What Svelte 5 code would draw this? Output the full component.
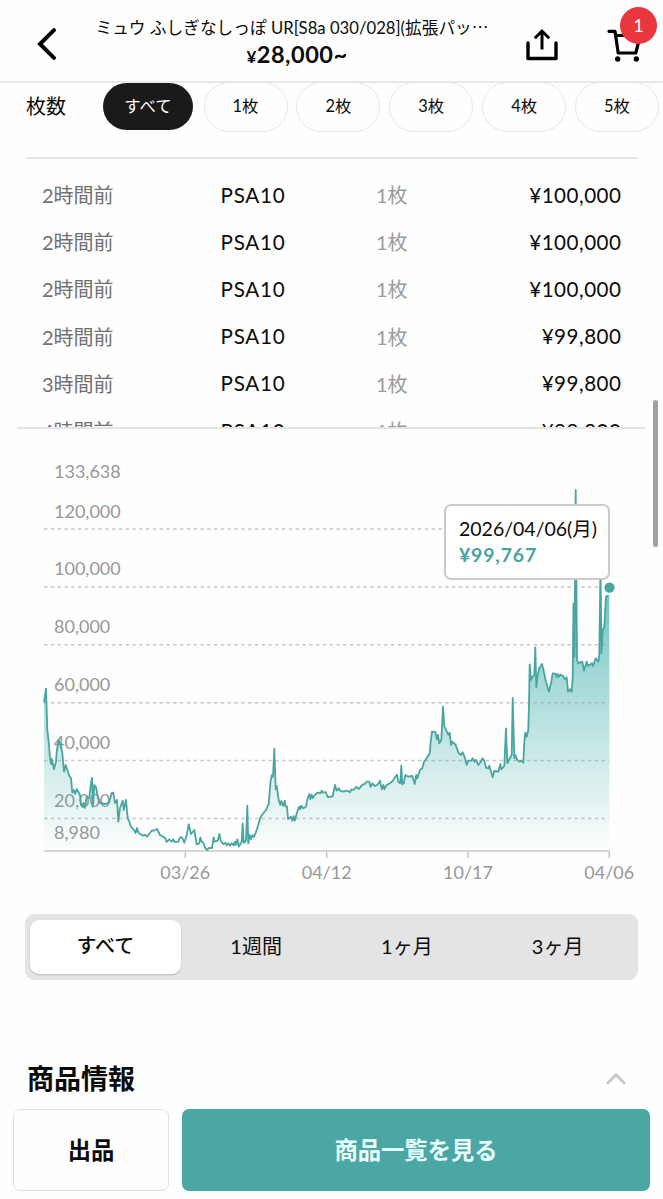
<script lang="ts">
	const counts = ["1枚", "2枚", "3枚", "4枚", "5枚"]
	const periods = ["すべて", "1週間", "1ヶ月", "3ヶ月"]
	let period = "すべて"

	const sales = [
		{ time: "2時間前", price: "¥100,000" },
		{ time: "2時間前", price: "¥100,000" },
		{ time: "2時間前", price: "¥100,000" },
		{ time: "2時間前", price: "¥99,800" },
		{ time: "3時間前", price: "¥99,800" },
		{ time: "4時間前", price: "¥99,800" },
	]

	const base = 851
	const yLabels = [
		{ text: "133,638", y: 478 },
		{ text: "120,000", y: 517.5, line: 529 },
		{ text: "100,000", y: 575.3, line: 587 },
		{ text: "80,000", y: 633.2, line: 644.8 },
		{ text: "60,000", y: 691, line: 702.8 },
		{ text: "40,000", y: 748.8, line: 760.6 },
		{ text: "20,000", y: 806.6, line: 818.4 },
		{ text: "8,980", y: 838.6 },
	]
	const xLabels = [
		{ text: "03/26", x: 185.3 },
		{ text: "04/12", x: 326.7 },
		{ text: "10/17", x: 468 },
		{ text: "04/06", x: 609.3 },
	]

	const line = `44,702.7 46,688.7 47.3,730 48.7,741.7 50,758.3 51,764 51.7,759 54,769 56,761.7 56.7,751.7
		58.7,740 60.7,745 62.3,753 64,771.7 65.7,765 69.3,776 71,778 72.3,792.7 73.7,790 75,794 76.7,789 80,795
		81,805 82.7,807 83.3,803 84.7,808 86.7,796.7 89.3,798 90.7,785 92,778 93,806.7 94.3,785 96,787 97.7,796
		100,803 105,804 109,802.7 111.7,793 113.3,792.7 115,803 117,800 118.3,821.7 120,808 122.7,800.7 123.7,810
		126,800 127.7,818 129.3,821.7 131,826.7 134,830 135.7,833 137,828 138.7,833 143,835.7 145,834.7 147,836.7
		151.7,830.7 154,830.5 157,829 160,835 165,837.7 166.7,842 169.3,839.3 171.7,841.7 173.3,839.3 174.7,842
		178.3,841.7 180,837.3 182,837.3 184.3,842.7 186.7,835 188.7,824.3 191,834 194.3,830 196.7,844.3 199.3,843.3
		200.3,837.3 201.7,841.7 203.3,842.7 205,847.7 207.3,850 208.7,848 212,848 213.7,837.3 214.7,841.7 217.7,840.7
		219.3,834 220.7,840.7 223.3,844 225.3,842.7 226.7,845.3 228.3,843.3 230,845.7 231.7,843.3 233.3,845.3
		235,841.7 235.7,845 237.3,839.3 238.7,846.7 241.7,841.7 242.7,823.3 243.7,842.7 246,840.7 247.3,805.7
		248.3,843.3 249.7,835 251,839.3 252.7,835 254,837 256.7,830 258.3,825 260,818.3 262.7,814 266,810 268.7,804
		270.7,780 272,775 273,776.7 274.3,748.7 275.7,789.3 276.7,786 278.7,800 280.3,805 281.3,801 283.3,806
		284.7,800.7 285.7,806.7 287,806.7 288,819 291,816.7 292.3,820.7 293.7,816 294.7,820.7 297.3,811.7
		299.3,806.7 300.3,809.3 301.3,805.7 303.3,808.3 306,806.7 307.3,799.3 309.3,794 310.3,799.3 311.7,794.7
		312.7,798 315,795 317.3,792.7 320.7,793 321.7,790.7 323,792.7 325.7,792 327.7,797 332.7,796.3 335,785
		336.7,790.7 338.7,788.3 340,790.7 343.3,791.7 347.3,790.7 350,792.3 351.3,789.3 354,789.7 356.3,786.7
		359,789 360.7,786.7 362.7,784.3 364.3,784.3 366.7,781.7 369.3,781.7 370.7,787 372.3,783.3 375,786 377.3,785
		380,780.7 381.7,789.3 383.3,785 384.3,789.3 386.7,785 390,783.3 392.7,781 395,777.3 397,774.7 398.3,781.7
		400.3,783.3 401.3,765.7 402.3,784.3 403.7,783.3 405.3,775 408.3,776.7 412.3,776 414.7,784 416.3,775
		417.3,778.3 420,770 422.3,768.3 424,761.7 426.7,758.3 429.7,753.3 430.7,741.7 432,731.7 435.3,732 437,739.3
		438,735 439.3,743.3 441.3,740 443,706.7 444.3,726 448.3,735 449.7,732.7 451,745 452.3,741.7 455.7,745
		458.7,753.3 461,755 462.7,752.3 464.3,756 466.7,765 468.3,760.7 471.3,760.7 472.7,758.3 474.7,761.7
		476,759.7 478.3,765 480,763 482.5,758.3 484.3,760.7 486,767.7 488.3,768.3 489.3,765.7 492.7,777.3 494.3,771
		498.3,771.7 500.3,764 501.3,769.3 504.3,766 506,728.3 507.3,763.3 509.3,759.3 511.7,755 512.7,698 514.3,758.3
		515.3,755 517,759.3 519.3,761.7 521.7,760.7 523.3,762.7 524.3,741.7 525.3,732.7 526.7,736.7 528.3,730
		529,704 529.7,664.3 531,680 532.7,676.7 534.3,675 535.3,647.3 536.3,687.3 537.7,675 539.3,668.3 542,664
		543.3,669.3 546,681.7 549,691.7 551.3,681.7 552.7,673.3 555.7,674 556.7,677.3 557.7,674 559,676.7
		560.3,674.7 563.3,676 564.7,679.3 566.7,677.3 568,691.7 570,689.3 571.7,691.7 572.7,676.7 573.5,603.3
		574.5,656.7 575.7,490 577,660 578.3,663.3 582.3,661.7 584,670.7 586.7,661.7 588,666 592,663.3 593,666
		595.7,658.3 598.3,661.7 599.3,655 600.5,565 601.5,653 602.7,630 604.3,626.7 606,596.7 609.3,594`

	const area = `44,${base} ${line} 609.5,${base}`
</script>

<div class="page" lang="ja">
	<header>
		<button class="back" aria-label="戻る">
			<svg width="22" height="34" viewBox="0 0 22 34">
				<path d="M18 3.2 L4 17 L18 30.8" fill="none" stroke="#000" stroke-width="4" stroke-linecap="round" />
			</svg>
		</button>
		<div class="heading">
			<div class="title">ミュウ ふしぎなしっぽ UR[S8a 030/028](拡張パッ<span class="more">…</span></div>
			<div class="price"><small>¥</small>28,000~</div>
		</div>
		<svg class="share" width="34" height="34" viewBox="0 0 34 34" fill="none" stroke="#000" stroke-width="3.4">
			<path d="M3 15 V30.5 H31 V15" stroke-linecap="round" stroke-linejoin="round" />
			<path d="M17 21.5 V3.8 M9.8 10.2 L17 3 L24.2 10.2" stroke-width="3" />
		</svg>
		<div class="cart">
			<svg width="36" height="34" viewBox="0 0 36 34">
				<path d="M2 3.3 H8 L11.2 25 H28.8 L33.2 7.5 H8.8" fill="none" stroke="#000" stroke-width="3.2" stroke-linecap="round" stroke-linejoin="round" />
				<circle cx="10.7" cy="31" r="2.7" />
				<circle cx="29.3" cy="31" r="2.7" />
			</svg>
			<span class="badge">1</span>
		</div>
	</header>

	<div class="filter">
		<span class="label">枚数</span>
		<button class="chip active">すべて</button>
		{#each counts as count}
			<button class="chip">{count}</button>
		{/each}
	</div>

	<div class="sales">
		{#each sales as sale}
			<div class="row">
				<span class="time">{sale.time}</span>
				<span class="grade">PSA10</span>
				<span class="qty">1枚</span>
				<span class="amount">{sale.price}</span>
			</div>
		{/each}
	</div>

	<div class="chart">
		<svg width="663" height="470" viewBox="0 429 663 470">
			<defs>
				<linearGradient id="fade" x1="0" y1="490" x2="0" y2={base} gradientUnits="userSpaceOnUse">
					<stop offset="0" stop-color="#3fb0aa" />
					<stop offset="1" stop-color="#3fb0aa" stop-opacity="0" />
				</linearGradient>
			</defs>
			{#each yLabels as label}
				<text x="54" y={label.y}>{label.text}</text>
			{/each}
			<polygon points={area} fill="url(#fade)" />
			{#each yLabels as label}
				{#if label.line}
					<line class="grid" x1="44" x2="609" y1={label.line} y2={label.line} />
				{/if}
			{/each}
			<path class="axis" d="M44 {base} H609.5" />
			{#each xLabels as label}
				<path class="axis" d="M{label.x} {base} v7" />
				<text x={label.x} y="879" text-anchor="middle">{label.text}</text>
			{/each}
			<polyline points={line} fill="none" stroke="#48a5a0" stroke-width="1.8" stroke-linejoin="round" />
			<circle cx="609.5" cy="587.6" r="6.5" fill="#48a5a0" stroke="#fff" stroke-width="2.6" />
		</svg>
		<div class="tooltip">
			<div>2026/04/06(月)</div>
			<strong>¥99,767</strong>
		</div>
	</div>

	<div class="periods">
		{#each periods as p}
			<button class:selected={p === period} on:click={() => (period = p)}>{p}</button>
		{/each}
	</div>

	<div class="info">
		<h2>商品情報</h2>
		<svg width="22" height="14" viewBox="0 0 22 14">
			<path d="M2 11.8 L11 3 L20 11.8" fill="none" stroke="#c6c6c6" stroke-width="3" />
		</svg>
	</div>

	<footer>
		<button class="sell">出品</button>
		<button class="list">商品一覧を見る</button>
	</footer>

	<div class="scrollbar"></div>
</div>

<style>
	:global(body) {
		background: #fff;
	}

	.page {
		position: relative;
		display: flex;
		flex-direction: column;
		width: 663px;
		height: 1199px;
		overflow: hidden;
		color: #0b0b0b;
		background: #fefefe;
		font-family: Lato, "Noto Sans CJK JP", sans-serif;
	}

	button {
		padding: 0;
		border: none;
		background: none;
		color: inherit;
		font: inherit;
		cursor: pointer;
	}

	svg {
		display: block;
		flex: none;
	}

	header {
		box-sizing: border-box;
		display: flex;
		flex: none;
		height: 83px;
		padding: 0 20px 0 36px;
		border-bottom: 2px solid #e8e8e8;
	}

	.back {
		height: 34px;
		margin-top: 27px;
	}

	.heading {
		flex: none;
		width: 396px;
		margin: 15px 0 0 36px;
		text-align: center;
		white-space: nowrap;
	}

	.title {
		font-size: 16.7px;
		line-height: 24px;
	}

	.more {
		font-family: "Noto Sans CJK JP", sans-serif;
	}

	.price {
		padding-left: 10px;
		font-size: 23.5px;
		font-weight: 700;
		letter-spacing: 0.5px;
		line-height: 29px;
	}

	.price small {
		font-size: 17px;
	}

	.share {
		margin: 28px 0 0 35px;
	}

	.cart {
		position: relative;
		margin: 28px 0 0 48px;
	}

	.badge {
		position: absolute;
		top: -21px;
		left: 13px;
		width: 37px;
		height: 37px;
		border-radius: 50%;
		background: #ea363d;
		color: #fff;
		font-size: 18px;
		line-height: 37px;
		text-align: center;
	}

	.filter {
		display: flex;
		flex: none;
		align-items: center;
		height: 49px;
		margin-top: -1px;
		padding-left: 26px;
	}

	.label {
		flex: none;
		width: 77px;
		padding-bottom: 2px;
		font-size: 20px;
	}

	.chip {
		box-sizing: border-box;
		flex: none;
		width: 84px;
		height: 50px;
		margin-right: 8.9px;
		padding-bottom: 3px;
		border: 1.5px solid #e6e6e6;
		border-radius: 25px;
		font-size: 16.4px;
	}

	.chip.active {
		width: 90px;
		height: 47px;
		margin-right: 10.5px;
		border: none;
		background: #1a1a1a;
		color: #fff;
	}

	.sales {
		box-sizing: border-box;
		flex: none;
		height: 272px;
		margin: 26px 17px 0;
		padding: 14px 0 0;
		overflow: hidden;
		border-bottom: 2px solid #e4e4e4;
		background: linear-gradient(#e4e4e4, #e4e4e4) 9px 0 / 612px 2px no-repeat;
	}

	.row {
		display: grid;
		grid-template-columns: 178.5px 155.5px 1fr auto;
		align-items: center;
		height: 47.2px;
		padding: 0 24.5px 0 25px;
		font-size: 20.6px;
	}

	.time {
		color: #707070;
		font-size: 20px;
	}

	.grade {
		letter-spacing: 0.8px;
	}

	.qty {
		color: #9b9b9b;
		font-size: 20px;
	}

	.amount {
		letter-spacing: 0.5px;
	}

	.chart {
		position: relative;
		flex: none;
		height: 485px;
	}

	.chart text {
		fill: #989898;
		font-size: 18px;
	}

	.grid {
		stroke: #999;
		stroke-opacity: 0.55;
		stroke-width: 1.5;
		stroke-dasharray: 3.4 3.4;
	}

	.axis {
		fill: none;
		stroke: #c6c6c6;
		stroke-width: 1.6;
	}

	.tooltip {
		position: absolute;
		top: 75px;
		left: 444px;
		box-sizing: border-box;
		width: 166px;
		height: 76px;
		padding: 10px 0 0 13px;
		border: 2px solid #cbcbcb;
		border-radius: 7px;
		background: #fff;
		font-size: 19.5px;
		line-height: 25.5px;
		white-space: nowrap;
	}

	.tooltip strong {
		display: block;
		color: #48a5a0;
		letter-spacing: 0.8px;
	}

	.periods {
		box-sizing: border-box;
		display: grid;
		grid-template-columns: repeat(4, 1fr);
		flex: none;
		width: 613px;
		height: 66px;
		margin-left: 25px;
		padding: 6px 5px;
		border-radius: 9px;
		background: #e4e4e4;
		font-size: 20px;
	}

	.periods button {
		padding-bottom: 4px;
	}

	.periods .selected {
		padding-bottom: 6px;
		border-radius: 9px;
		background: #fff;
		box-shadow: 0 1px 2px #0003;
		font-weight: 500;
	}

	.info {
		display: flex;
		flex: none;
		align-items: center;
		justify-content: space-between;
		height: 40px;
		margin-top: 79px;
		padding: 0 36px 0 27px;
	}

	h2 {
		margin: 0;
		font-size: 27px;
		line-height: 40px;
	}

	footer {
		display: flex;
		gap: 13px;
		height: 82px;
		margin-top: 10px;
		padding: 0 13px;
		font-size: 23.3px;
		font-weight: 700;
	}

	footer button {
		padding-bottom: 3px;
	}

	.sell {
		box-sizing: border-box;
		width: 156px;
		border: 1.5px solid #e0e0e0;
		border-radius: 7px;
	}

	.list {
		flex: 1;
		border-radius: 7px;
		background: #4ba7a4;
		color: #e9ffff;
	}

	.scrollbar {
		position: absolute;
		top: 400px;
		left: 653px;
		width: 5px;
		height: 147px;
		border-radius: 3px;
		background: #a1a1a1;
	}
</style>
